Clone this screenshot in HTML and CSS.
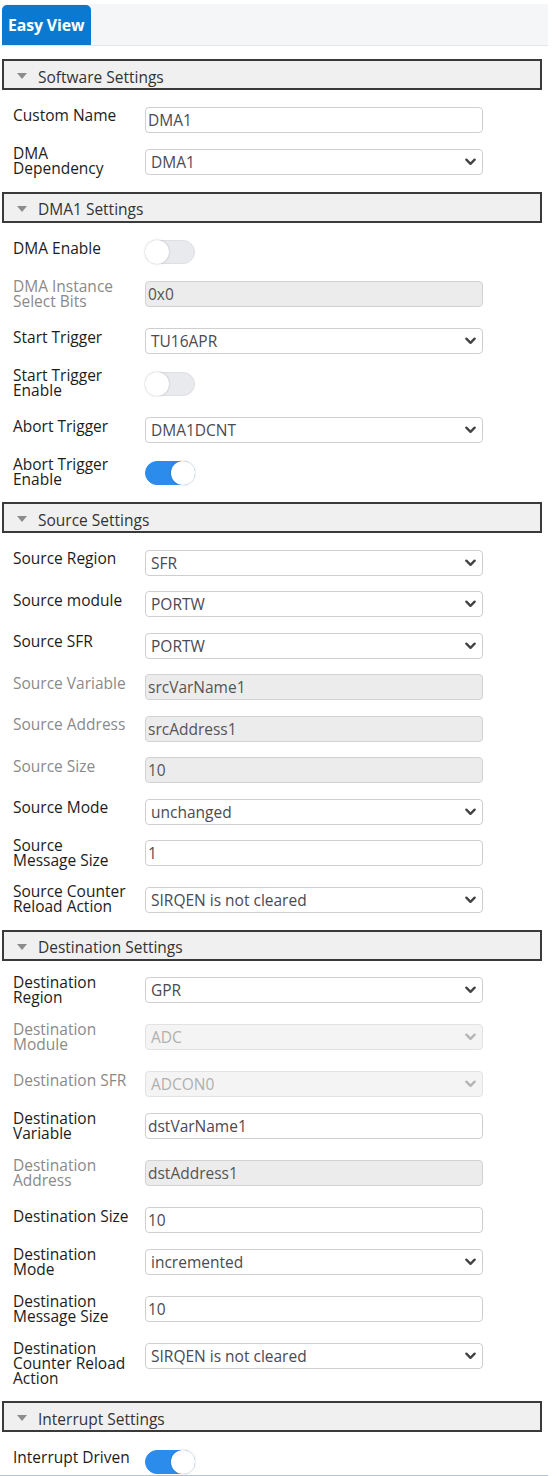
FILE: index.html
```html
<!DOCTYPE html>
<html lang="en">
<head>
<meta charset="utf-8">
<title>Easy View</title>
<link rel="stylesheet" href="styles.css">
</head>
<body>
<div class="page">
  <div class="tabbar"><div class="tab">Easy View</div></div>

  <section class="section">
    <div class="sec-head"><span class="caret"></span>Software Settings</div>
    <div class="sec-body">
      <div class="row"><div class="label">Custom Name</div><div class="field">DMA1</div></div>
      <div class="row"><div class="label ml">DMA<br>Dependency</div><div class="field select"><span>DMA1</span><svg class="chev" viewBox="0 0 12 8"><path d="M1.5 1.5 L6 6 L10.5 1.5"/></svg></div></div>
    </div>
  </section>

  <section class="section">
    <div class="sec-head"><span class="caret"></span>DMA1 Settings</div>
    <div class="sec-body">
      <div class="row"><div class="label">DMA Enable</div><div class="toggle"><span class="knob"></span></div></div>
      <div class="row"><div class="label ml dis">DMA Instance<br>Select Bits</div><div class="field ro">0x0</div></div>
      <div class="row"><div class="label">Start Trigger</div><div class="field select"><span>TU16APR</span><svg class="chev" viewBox="0 0 12 8"><path d="M1.5 1.5 L6 6 L10.5 1.5"/></svg></div></div>
      <div class="row"><div class="label ml">Start Trigger<br>Enable</div><div class="toggle low"><span class="knob"></span></div></div>
      <div class="row"><div class="label">Abort Trigger</div><div class="field select"><span>DMA1DCNT</span><svg class="chev" viewBox="0 0 12 8"><path d="M1.5 1.5 L6 6 L10.5 1.5"/></svg></div></div>
      <div class="row"><div class="label ml">Abort Trigger<br>Enable</div><div class="toggle low on"><span class="knob"></span></div></div>
    </div>
  </section>

  <section class="section src">
    <div class="sec-head"><span class="caret"></span>Source Settings</div>
    <div class="sec-body">
      <div class="row"><div class="label">Source Region</div><div class="field select"><span>SFR</span><svg class="chev" viewBox="0 0 12 8"><path d="M1.5 1.5 L6 6 L10.5 1.5"/></svg></div></div>
      <div class="row"><div class="label">Source module</div><div class="field select"><span>PORTW</span><svg class="chev" viewBox="0 0 12 8"><path d="M1.5 1.5 L6 6 L10.5 1.5"/></svg></div></div>
      <div class="row"><div class="label">Source SFR</div><div class="field select"><span>PORTW</span><svg class="chev" viewBox="0 0 12 8"><path d="M1.5 1.5 L6 6 L10.5 1.5"/></svg></div></div>
      <div class="row"><div class="label dis">Source Variable</div><div class="field ro">srcVarName1</div></div>
      <div class="row"><div class="label dis">Source Address</div><div class="field ro">srcAddress1</div></div>
      <div class="row"><div class="label dis">Source Size</div><div class="field ro">10</div></div>
      <div class="row"><div class="label">Source Mode</div><div class="field select"><span>unchanged</span><svg class="chev" viewBox="0 0 12 8"><path d="M1.5 1.5 L6 6 L10.5 1.5"/></svg></div></div>
      <div class="row"><div class="label ml">Source<br>Message Size</div><div class="field">1</div></div>
      <div class="row"><div class="label ml">Source Counter<br>Reload Action</div><div class="field select"><span>SIRQEN is not cleared</span><svg class="chev" viewBox="0 0 12 8"><path d="M1.5 1.5 L6 6 L10.5 1.5"/></svg></div></div>
    </div>
  </section>

  <section class="section">
    <div class="sec-head"><span class="caret"></span>Destination Settings</div>
    <div class="sec-body">
      <div class="row"><div class="label ml">Destination<br>Region</div><div class="field select"><span>GPR</span><svg class="chev" viewBox="0 0 12 8"><path d="M1.5 1.5 L6 6 L10.5 1.5"/></svg></div></div>
      <div class="row"><div class="label ml dis">Destination<br>Module</div><div class="field select disabled"><span>ADC</span><svg class="chev" viewBox="0 0 12 8"><path d="M1.5 1.5 L6 6 L10.5 1.5"/></svg></div></div>
      <div class="row"><div class="label dis">Destination SFR</div><div class="field select disabled"><span>ADCON0</span><svg class="chev" viewBox="0 0 12 8"><path d="M1.5 1.5 L6 6 L10.5 1.5"/></svg></div></div>
      <div class="row"><div class="label ml">Destination<br>Variable</div><div class="field">dstVarName1</div></div>
      <div class="row"><div class="label ml dis">Destination<br>Address</div><div class="field ro">dstAddress1</div></div>
      <div class="row"><div class="label">Destination Size</div><div class="field">10</div></div>
      <div class="row"><div class="label ml">Destination<br>Mode</div><div class="field select"><span>incremented</span><svg class="chev" viewBox="0 0 12 8"><path d="M1.5 1.5 L6 6 L10.5 1.5"/></svg></div></div>
      <div class="row"><div class="label ml">Destination<br>Message Size</div><div class="field">10</div></div>
      <div class="row"><div class="label ml">Destination<br>Counter Reload<br>Action</div><div class="field select"><span>SIRQEN is not cleared</span><svg class="chev" viewBox="0 0 12 8"><path d="M1.5 1.5 L6 6 L10.5 1.5"/></svg></div></div>
    </div>
  </section>

  <section class="section last">
    <div class="sec-head"><span class="caret"></span>Interrupt Settings</div>
    <div class="sec-body">
      <div class="row"><div class="label">Interrupt Driven</div><div class="toggle on"><span class="knob"></span></div></div>
    </div>
  </section>
  <div class="bottom-line"></div>
</div>
</body>
</html>
```
FILE: styles.css
```css
* { box-sizing: border-box; }

html, body {
  margin: 0;
  padding: 0;
  background: #ffffff;
}

body {
  font-family: "Open Sans", "Noto Sans", "Liberation Sans", sans-serif;
  font-size: 15.5px;
  color: #1f1f1f;
}

.page {
  padding: 4px 0 0 2px;
}

.tabbar {
  width: 546px;
  height: 42px;
  background: #f5f6f8;
  border-bottom: 1px solid #e4e6e9;
  padding-top: 1px;
  display: flex;
}

.tab {
  width: 89px;
  height: 40px;
  background: #0b79d0;
  color: #ffffff;
  font-weight: 700;
  font-size: 15.8px;
  border-radius: 5px 5px 0 0;
  padding-left: 6px;
  display: flex;
  align-items: center;
  letter-spacing: -0.1px;
}

.section {
  width: 540px;
}

.tabbar + .section {
  margin-top: 13px;
}

.sec-head {
  height: 31px;
  background: #f0f0f0;
  border: 2px solid #3a3a3a;
  display: flex;
  align-items: center;
  padding-left: 13px;
  padding-top: 4px;
  color: #333333;
  font-size: 15.5px;
}

.caret {
  width: 0;
  height: 0;
  border-left: 5px solid transparent;
  border-right: 5px solid transparent;
  border-top: 6px solid #8c8c8c;
  margin-right: 11px;
  margin-top: -1px;
}

.sec-body {
  padding: 16.5px 0 12px 11px;
  display: flex;
  flex-direction: column;
  gap: 16px;
}

.section.src .sec-body {
  gap: 15.5px;
}

.section.last .sec-body {
  padding-bottom: 0;
}

.row {
  display: flex;
  align-items: flex-start;
  min-height: 26px;
}

.label {
  width: 132px;
  flex: none;
  line-height: 15px;
  padding-top: 1.5px;
  white-space: nowrap;
  color: #1c1c1c;
}

.label.ml {
  padding-top: 0;
  margin-top: -2.5px;
  padding-bottom: 3.5px;
}

.label.dis {
  color: #8a8a8a;
}

.field {
  width: 338px;
  height: 26px;
  border: 1px solid #cfcfcf;
  border-radius: 4px;
  background: #ffffff;
  color: #4a4a52;
  padding: 0 0 0 2px;
  display: flex;
  align-items: center;
  line-height: 24px;
  white-space: nowrap;
}

.field.ro {
  background: #ececec;
  border-color: #d2d2d2;
  color: #555555;
}

.field.select {
  padding: 0 6px 0 5px;
  justify-content: space-between;
}

.field.select.disabled {
  background: #f4f4f4;
  border-color: #e2e2e2;
  color: #b0b0b0;
}

.chev {
  width: 11px;
  height: 8px;
  fill: none;
  stroke: #444444;
  stroke-width: 2.6;
  stroke-linecap: round;
  stroke-linejoin: round;
}

.disabled .chev {
  stroke: #b5b5b5;
}

.toggle {
  width: 50px;
  height: 24px;
  margin-top: 1px;
  border-radius: 12px;
  background: #e9eaed;
  border: 1px solid #dedfe2;
  display: flex;
  align-items: center;
  justify-content: flex-start;
}

.toggle.low {
  margin-top: 2px;
}

.toggle .knob {
  width: 24px;
  height: 24px;
  margin: -1px;
  border-radius: 50%;
  background: #ffffff;
  box-shadow: 0 0 2px rgba(0, 0, 0, 0.25);
}

.toggle.on {
  background: #2b8cec;
  border-color: #2b8cec;
  justify-content: flex-end;
}

.bottom-line {
  width: 548px;
  margin-left: -2px;
  height: 2px;
  background: #b2c5d8;
}
```
